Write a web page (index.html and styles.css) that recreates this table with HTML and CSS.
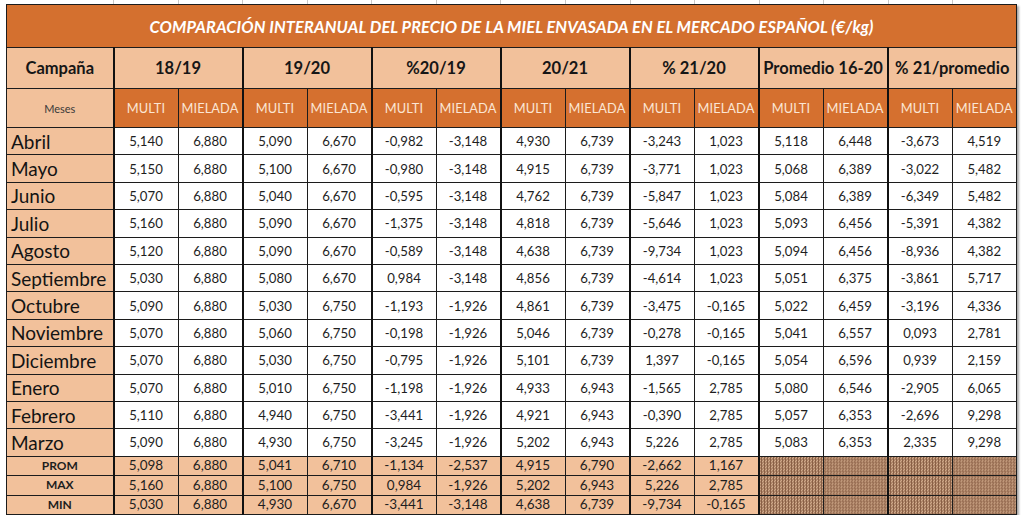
FILE: index.html
```html
<!DOCTYPE html>
<html lang="es">
<head>
<meta charset="utf-8">
<title>Comparación interanual del precio de la miel</title>
<link rel="stylesheet" href="styles.css">
</head>
<body>
<div class="sheet">
  <div class="ticks"><span></span><span></span><span></span><span></span><span></span><span></span><span></span><span></span><span></span><span></span><span></span><span></span><span></span><span></span><span></span></div>
  <table class="grid">
    <colgroup>
      <col class="c-first">
      <col><col><col><col><col><col><col><col><col><col><col><col><col><col>
    </colgroup>
    <thead>
      <tr class="r-title"><th colspan="15" class="title">COMPARACIÓN INTERANUAL DEL PRECIO DE LA MIEL ENVASADA EN EL MERCADO ESPAÑOL (€/kg)</th></tr>
      <tr class="r-head">
        <th class="head">Campaña</th>
        <th class="head g" colspan="2">18/19</th>
        <th class="head g" colspan="2">19/20</th>
        <th class="head g" colspan="2">%20/19</th>
        <th class="head g" colspan="2">20/21</th>
        <th class="head g" colspan="2">% 21/20</th>
        <th class="head g" colspan="2">Promedio 16-20</th>
        <th class="head g" colspan="2">% 21/promedio</th>
      </tr>
      <tr class="r-sub">
        <th class="meses">Meses</th>
        <th class="sub g">MULTI</th><th class="sub">MIELADA</th>
        <th class="sub g">MULTI</th><th class="sub">MIELADA</th>
        <th class="sub g">MULTI</th><th class="sub">MIELADA</th>
        <th class="sub g">MULTI</th><th class="sub">MIELADA</th>
        <th class="sub g">MULTI</th><th class="sub">MIELADA</th>
        <th class="sub g">MULTI</th><th class="sub">MIELADA</th>
        <th class="sub g">MULTI</th><th class="sub">MIELADA</th>
      </tr>
    </thead>
    <tbody>
      <tr class="r-data"><th class="mes">Abril</th><td class="g">5,140</td><td>6,880</td><td class="g">5,090</td><td>6,670</td><td class="g">-0,982</td><td>-3,148</td><td class="g">4,930</td><td>6,739</td><td class="g">-3,243</td><td>1,023</td><td class="g">5,118</td><td>6,448</td><td class="g">-3,673</td><td>4,519</td></tr>
      <tr class="r-data"><th class="mes">Mayo</th><td class="g">5,150</td><td>6,880</td><td class="g">5,100</td><td>6,670</td><td class="g">-0,980</td><td>-3,148</td><td class="g">4,915</td><td>6,739</td><td class="g">-3,771</td><td>1,023</td><td class="g">5,068</td><td>6,389</td><td class="g">-3,022</td><td>5,482</td></tr>
      <tr class="r-data"><th class="mes">Junio</th><td class="g">5,070</td><td>6,880</td><td class="g">5,040</td><td>6,670</td><td class="g">-0,595</td><td>-3,148</td><td class="g">4,762</td><td>6,739</td><td class="g">-5,847</td><td>1,023</td><td class="g">5,084</td><td>6,389</td><td class="g">-6,349</td><td>5,482</td></tr>
      <tr class="r-data"><th class="mes">Julio</th><td class="g">5,160</td><td>6,880</td><td class="g">5,090</td><td>6,670</td><td class="g">-1,375</td><td>-3,148</td><td class="g">4,818</td><td>6,739</td><td class="g">-5,646</td><td>1,023</td><td class="g">5,093</td><td>6,456</td><td class="g">-5,391</td><td>4,382</td></tr>
      <tr class="r-data"><th class="mes">Agosto</th><td class="g">5,120</td><td>6,880</td><td class="g">5,090</td><td>6,670</td><td class="g">-0,589</td><td>-3,148</td><td class="g">4,638</td><td>6,739</td><td class="g">-9,734</td><td>1,023</td><td class="g">5,094</td><td>6,456</td><td class="g">-8,936</td><td>4,382</td></tr>
      <tr class="r-data"><th class="mes">Septiembre</th><td class="g">5,030</td><td>6,880</td><td class="g">5,080</td><td>6,670</td><td class="g">0,984</td><td>-3,148</td><td class="g">4,856</td><td>6,739</td><td class="g">-4,614</td><td>1,023</td><td class="g">5,051</td><td>6,375</td><td class="g">-3,861</td><td>5,717</td></tr>
      <tr class="r-data"><th class="mes">Octubre</th><td class="g">5,090</td><td>6,880</td><td class="g">5,030</td><td>6,750</td><td class="g">-1,193</td><td>-1,926</td><td class="g">4,861</td><td>6,739</td><td class="g">-3,475</td><td>-0,165</td><td class="g">5,022</td><td>6,459</td><td class="g">-3,196</td><td>4,336</td></tr>
      <tr class="r-data"><th class="mes">Noviembre</th><td class="g">5,070</td><td>6,880</td><td class="g">5,060</td><td>6,750</td><td class="g">-0,198</td><td>-1,926</td><td class="g">5,046</td><td>6,739</td><td class="g">-0,278</td><td>-0,165</td><td class="g">5,041</td><td>6,557</td><td class="g">0,093</td><td>2,781</td></tr>
      <tr class="r-data"><th class="mes">Diciembre</th><td class="g">5,070</td><td>6,880</td><td class="g">5,030</td><td>6,750</td><td class="g">-0,795</td><td>-1,926</td><td class="g">5,101</td><td>6,739</td><td class="g">1,397</td><td>-0,165</td><td class="g">5,054</td><td>6,596</td><td class="g">0,939</td><td>2,159</td></tr>
      <tr class="r-data"><th class="mes">Enero</th><td class="g">5,070</td><td>6,880</td><td class="g">5,010</td><td>6,750</td><td class="g">-1,198</td><td>-1,926</td><td class="g">4,933</td><td>6,943</td><td class="g">-1,565</td><td>2,785</td><td class="g">5,080</td><td>6,546</td><td class="g">-2,905</td><td>6,065</td></tr>
      <tr class="r-data"><th class="mes">Febrero</th><td class="g">5,110</td><td>6,880</td><td class="g">4,940</td><td>6,750</td><td class="g">-3,441</td><td>-1,926</td><td class="g">4,921</td><td>6,943</td><td class="g">-0,390</td><td>2,785</td><td class="g">5,057</td><td>6,353</td><td class="g">-2,696</td><td>9,298</td></tr>
      <tr class="r-data"><th class="mes">Marzo</th><td class="g">5,090</td><td>6,880</td><td class="g">4,930</td><td>6,750</td><td class="g">-3,245</td><td>-1,926</td><td class="g">5,202</td><td>6,943</td><td class="g">5,226</td><td>2,785</td><td class="g">5,083</td><td>6,353</td><td class="g">2,335</td><td>9,298</td></tr>
      <tr class="r-sum"><th class="lab">PROM</th><td class="g">5,098</td><td>6,880</td><td class="g">5,041</td><td>6,710</td><td class="g">-1,134</td><td>-2,537</td><td class="g">4,915</td><td>6,790</td><td class="g">-2,662</td><td>1,167</td><td class="g pat"></td><td class="pat"></td><td class="g pat"></td><td class="pat"></td></tr>
      <tr class="r-sum"><th class="lab">MAX</th><td class="g">5,160</td><td>6,880</td><td class="g">5,100</td><td>6,750</td><td class="g">0,984</td><td>-1,926</td><td class="g">5,202</td><td>6,943</td><td class="g">5,226</td><td>2,785</td><td class="g pat"></td><td class="pat"></td><td class="g pat"></td><td class="pat"></td></tr>
      <tr class="r-sum"><th class="lab">MIN</th><td class="g">5,030</td><td>6,880</td><td class="g">4,930</td><td>6,670</td><td class="g">-3,441</td><td>-3,148</td><td class="g">4,638</td><td>6,739</td><td class="g">-9,734</td><td>-0,165</td><td class="g pat"></td><td class="pat"></td><td class="g pat"></td><td class="pat"></td></tr>
    </tbody>
  </table>
</div>
</body>
</html>
```
FILE: styles.css
```css
html, body {
  margin: 0;
  padding: 0;
  background: #ffffff;
}

body {
  font-family: Lato, "Liberation Sans", sans-serif;
  color: #1a1a1a;
}

.sheet {
  padding: 0 0 0 6px;
  width: 1011px;
}

.ticks {
  display: grid;
  grid-template-columns: 107px repeat(14, 1fr);
  height: 4px;
}

.ticks span {
  border-left: 1px solid #c8c8c8;
}

.ticks span:first-child {
  border-left-color: transparent;
}

.grid {
  width: 1011px;
  table-layout: fixed;
  border-collapse: collapse;
  box-shadow: 2px 2px 2px rgba(0, 0, 0, 0.35);
}

.grid col.c-first {
  width: 107px;
}

.grid th,
.grid td {
  padding: 0;
  border: 1.5px solid #1c1c1c;
  text-align: center;
  white-space: nowrap;
  overflow: hidden;
}

.grid .g {
  border-left: 2px solid #111;
}

.r-title {
  height: 43px;
}

.title {
  background: #d4702f;
  color: #ffffff;
  font-weight: 700;
  font-style: italic;
  font-size: 16.4px;
  letter-spacing: 0.1px;
  padding-top: 2px;
}

.r-head {
  height: 41px;
}

.head {
  background: #f2c19b;
  font-weight: 700;
  font-size: 16.5px;
  color: #161616;
}

.r-sub {
  height: 39px;
}

.meses {
  background: #f2c19b;
  font-weight: 400;
  font-size: 11px;
  color: #3a3a3a;
}

.sub {
  background: #d5702f;
  color: #fbe6d4;
  font-weight: 400;
  font-size: 12.8px;
  letter-spacing: 0.1px;
}

.r-data {
  height: 27.4px;
}

.r-data td {
  background: #ffffff;
  font-size: 13.2px;
  color: #1e1e1e;
}

.mes {
  background: #f2c19b;
  text-align: left !important;
  padding-left: 4px !important;
  font-weight: 400;
  font-size: 19px;
  color: #141414;
}

.r-sum {
  height: 19.5px;
}

.r-sum td,
.r-sum th {
  background: #f2c19b;
  font-size: 13.5px;
  line-height: 1;
  color: #1e1e1e;
}

.lab {
  font-weight: 700;
  font-size: 12px !important;
}

.r-sum td.pat {
  background-color: #a77f62;
  background-image: repeating-conic-gradient(#8a6046 0 25%, #d0a98a 0 50%);
  background-size: 3px 3px;
}
```
